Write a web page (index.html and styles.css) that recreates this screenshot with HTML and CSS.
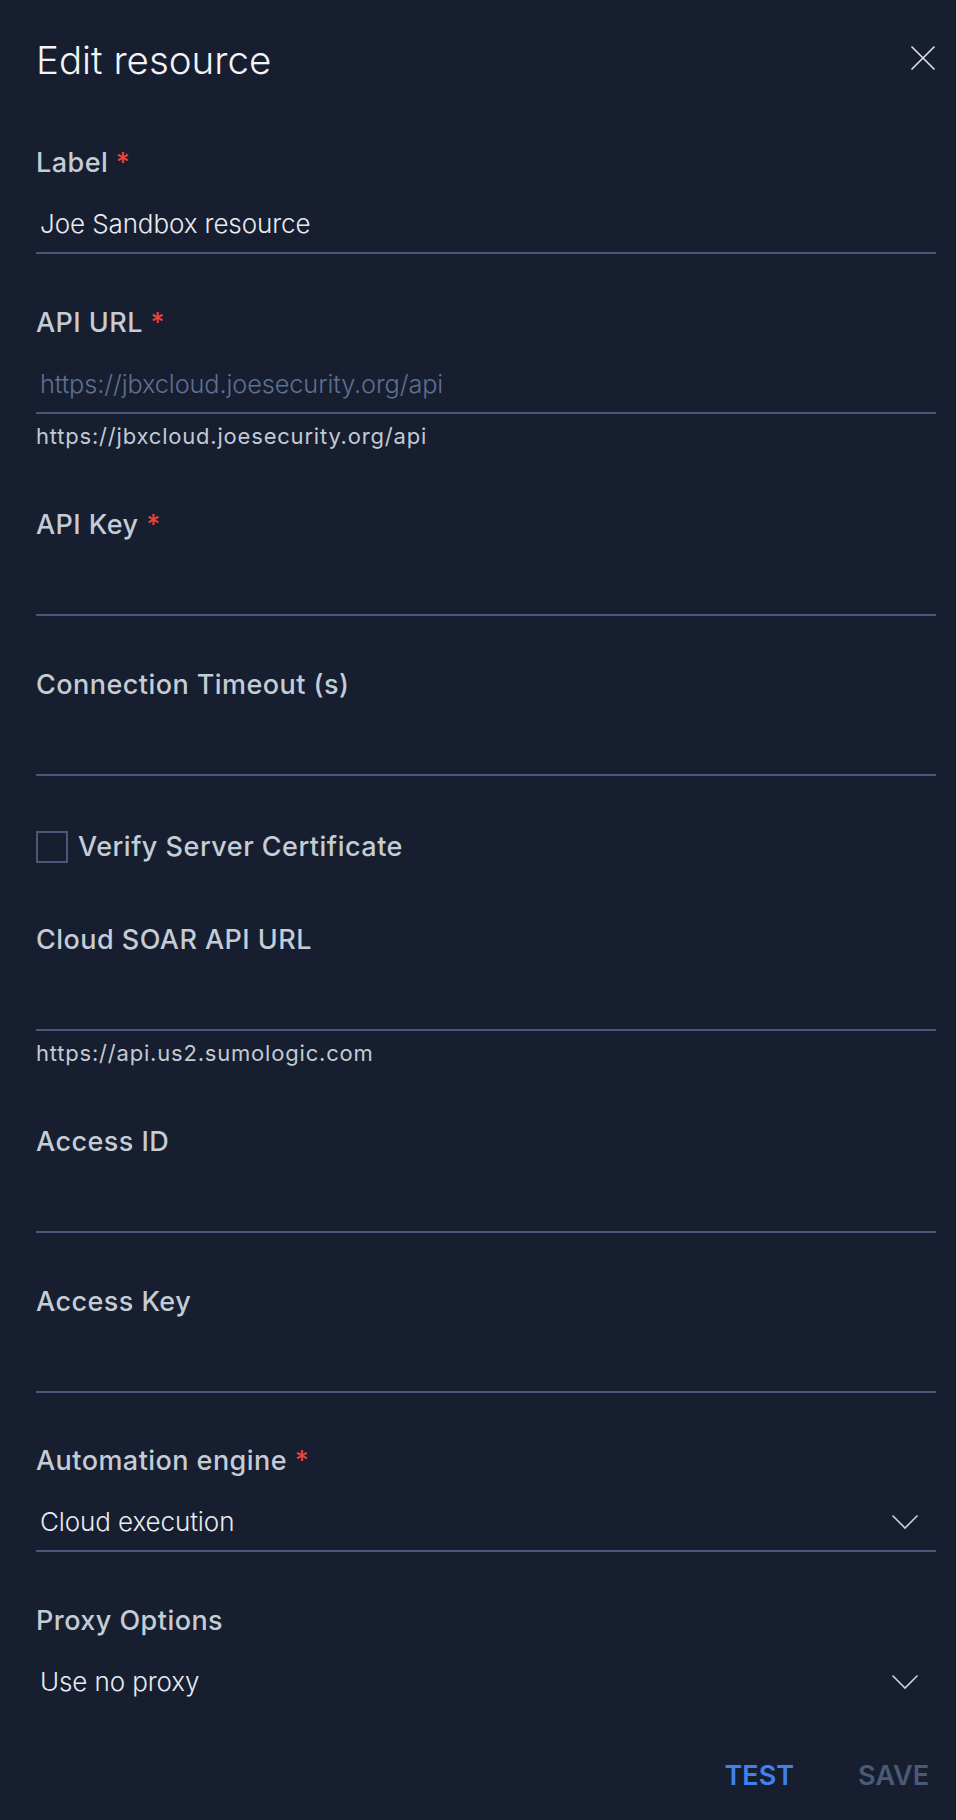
FILE: index.html
```html
<!DOCTYPE html>
<html lang="en">
<head>
<meta charset="utf-8">
<title>Edit resource</title>
<link rel="stylesheet" href="styles.css">
</head>
<body>
<div class="panel">
  <header class="header">
    <h1 class="title">Edit resource</h1>
    <button class="close" aria-label="Close">
      <svg width="26" height="26" viewBox="0 0 26 26"><path d="M1.5 1.5 L24.5 24.5 M24.5 1.5 L1.5 24.5" stroke="#dfe3e9" stroke-width="1.6" fill="none"/></svg>
    </button>
  </header>

  <div class="form">
    <div class="field">
      <div class="label">Label <span class="req">*</span></div>
      <div class="input"><span class="value">Joe Sandbox resource</span></div>
    </div>

    <div class="field field-help">
      <div class="label">API URL <span class="req">*</span></div>
      <div class="input"><span class="placeholder">https://jbxcloud.joesecurity.org/api</span></div>
      <div class="help">https://jbxcloud.joesecurity.org/api</div>
    </div>

    <div class="field">
      <div class="label">API Key <span class="req">*</span></div>
      <div class="input"><span class="value"></span></div>
    </div>

    <div class="field">
      <div class="label">Connection Timeout (s)</div>
      <div class="input"><span class="value"></span></div>
    </div>

    <div class="check-row">
      <span class="checkbox"></span>
      <span class="check-label">Verify Server Certificate</span>
    </div>

    <div class="field field-help">
      <div class="label">Cloud SOAR API URL</div>
      <div class="input"><span class="value"></span></div>
      <div class="help">https://api.us2.sumologic.com</div>
    </div>

    <div class="field">
      <div class="label">Access ID</div>
      <div class="input"><span class="value"></span></div>
    </div>

    <div class="field">
      <div class="label">Access Key</div>
      <div class="input"><span class="value"></span></div>
    </div>

    <div class="field">
      <div class="label">Automation engine <span class="req">*</span></div>
      <div class="input select"><span class="value">Cloud execution</span>
        <svg class="chevron" width="28" height="16" viewBox="0 0 28 16"><path d="M1.5 1.5 L14 14 L26.5 1.5" stroke="#c9d0d8" stroke-width="1.6" fill="none"/></svg>
      </div>
    </div>

    <div class="field">
      <div class="label">Proxy Options</div>
      <div class="input select no-line"><span class="value">Use no proxy</span>
        <svg class="chevron" width="28" height="16" viewBox="0 0 28 16"><path d="M1.5 1.5 L14 14 L26.5 1.5" stroke="#c9d0d8" stroke-width="1.6" fill="none"/></svg>
      </div>
    </div>
  </div>

  <div class="actions">
    <button class="btn btn-test">TEST</button>
    <button class="btn btn-save">SAVE</button>
  </div>
</div>
</body>
</html>
```

FILE: styles.css
```css
html, body {
  margin: 0;
  padding: 0;
  background: #161e30;
}

body {
  font-family: Inter, "Open Sans", "Liberation Sans", sans-serif;
  color: #c4ccd5;
  min-height: 1820px;
}

.panel {
  padding: 37px 20px 0 36px;
}

.header {
  display: flex;
  justify-content: space-between;
  align-items: flex-start;
  margin-bottom: 64px;
}

.title {
  margin: 0;
  font-size: 38.5px;
  line-height: 46px;
  font-weight: 300;
  color: #f2f4f7;
}

.close {
  background: none;
  border: 0;
  padding: 0;
  margin: 8px 0 0 0;
  width: 26px;
  height: 26px;
  display: block;
}

.close svg {
  display: block;
}

.form {
  display: flex;
  flex-direction: column;
}

.field {
  margin-bottom: 52.5px;
}

.label {
  font-size: 27px;
  line-height: 32px;
  font-weight: 500;
  letter-spacing: 0.45px;
  color: #c4ccd5;
}

.req {
  color: #e5453a;
}

.input {
  margin-top: 29px;
  padding: 0 0 12px 4px;
  border-bottom: 2px solid #4a5978;
  height: 32px;
  display: flex;
  align-items: center;
}

.input.no-line {
  border-bottom-color: transparent;
}

.select {
  justify-content: space-between;
  padding-right: 17px;
}

.chevron {
  display: block;
  flex: none;
}

.value,
.placeholder {
  font-size: 26px;
  line-height: 32px;
  font-weight: 300;
  letter-spacing: -0.1px;
  color: #e8ebf0;
}

.placeholder {
  font-size: 25.3px;
  color: #5f7090;
}

.help {
  margin: 8.5px 0 6.5px 0;
  font-size: 22px;
  line-height: 28px;
  font-weight: 400;
  letter-spacing: 0.8px;
  color: #c2cad3;
}

.check-row {
  display: flex;
  align-items: center;
  gap: 10px;
  margin-top: 3px;
  margin-bottom: 60.5px;
  height: 32px;
}

.checkbox {
  width: 28px;
  height: 28px;
  border: 2px solid #4a5978;
  flex: none;
}

.check-label {
  font-size: 27px;
  line-height: 32px;
  font-weight: 500;
  letter-spacing: 0.5px;
  color: #c4ccd5;
}

.actions {
  display: flex;
  justify-content: flex-end;
  gap: 48px;
  margin-top: -4px;
}

.btn {
  background: none;
  border: 0;
  padding: 0 7px 0 9px;
  font-family: Inter, "Open Sans", "Liberation Sans", sans-serif;
  font-size: 27px;
  line-height: 32px;
  font-weight: 600;
}

.btn-test {
  color: #3f82ee;
}

.btn-save {
  color: #4b5a74;
}
```
